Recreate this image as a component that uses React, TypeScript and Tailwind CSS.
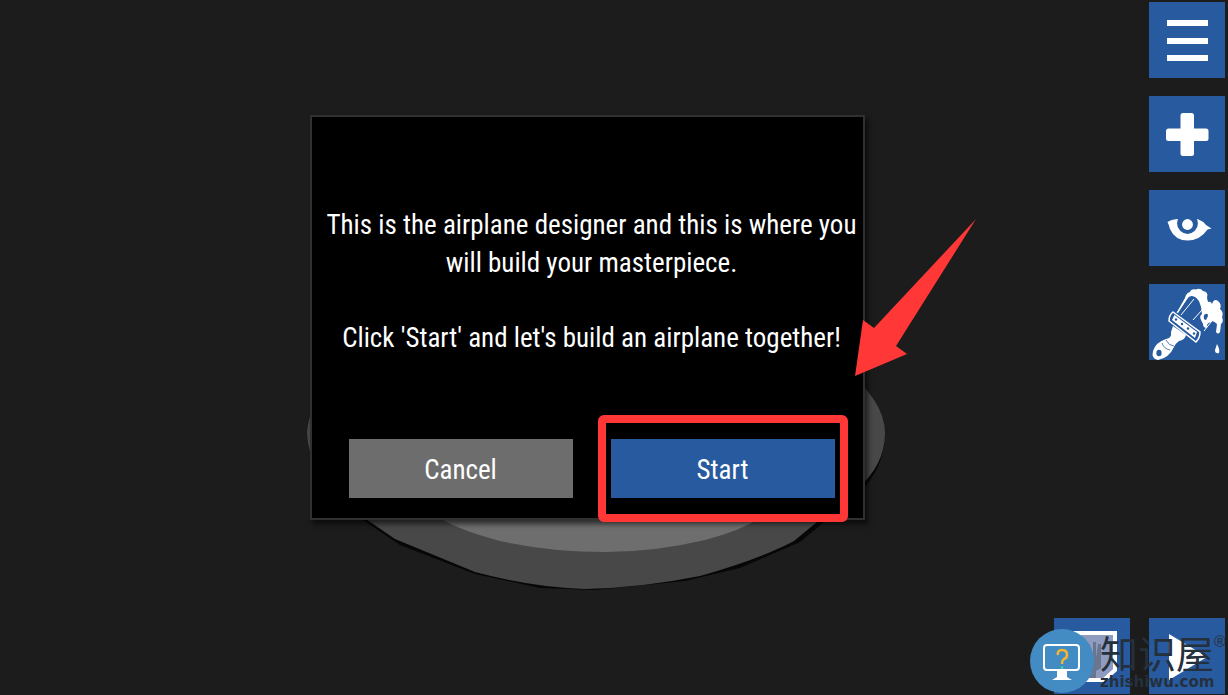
import React from "react";

interface ToolButtonProps {
  label: string;
  children: React.ReactNode;
}

function ToolButton({ label, children }: ToolButtonProps) {
  return (
    <button type="button" aria-label={label} className="block size-[76px] bg-[#285a9f] hover:bg-[#3268b3]">
      <svg viewBox="0 0 76 76" className="size-full" aria-hidden="true">
        {children}
      </svg>
    </button>
  );
}

function MenuIcon() {
  return (
    <g fill="#fff">
      <rect x="18" y="18" width="41" height="6" />
      <rect x="18" y="36" width="41" height="6" />
      <rect x="18" y="53" width="41" height="6" />
    </g>
  );
}

function PlusIcon() {
  return (
    <g fill="#fff">
      <rect x="31.5" y="17" width="13.5" height="43" rx="2.5" />
      <rect x="17" y="32.5" width="42.5" height="12.5" rx="2.5" />
    </g>
  );
}

function EyeIcon() {
  return (
    <g>
      <path
        d="M18.500 32 Q22 29.500 28.500 29 L38 34 L48.500 29 Q54 31 57 35 L62.500 38.500 L58.500 39.500 Q51 50.500 38.500 50.500 Q26 50.500 21 39 Q20 35 18.500 32 Z"
        fill="#fff"
      />
      <circle cx="38.5" cy="33.5" r="10.4" fill="#285a9f" />
      <circle cx="38.5" cy="34.5" r="5.4" fill="#fff" />
    </g>
  );
}

function BrushIcon() {
  return (
    <g>
      {/* bristles and paint */}
      <path d="M28 29 L41 10 M32 31 L45 15 M44 36 L53 26 M55 47 L66 33" stroke="#fff" strokeWidth="1" fill="none" />
      <path
        d="M28 28 L36 14 Q37 9 41 8 Q42 4.500 47 5.500 Q51 3.500 54 7 Q60 8 58 14 L59 18 Q62 17 63 20 Q65 14 69 17 Q73 20 71 25 Q75 28 73 33 Q75 38 72 40 L71 48 Q69 51 67 48 L68 40 Q64 36 62 38 Q57 39 58 44 Q54 44 54 40 L52 36 Q50 32 53 30 L52 23 Q50 15 46 13 Q41 10 38 15 L29 29 Z"
        fill="#fff"
      />
      <path d="M55 31 Q59 28 59 32 L57 36 Q54 36 55 31 Z" fill="#285a9f" />
      <path d="M68 60 Q71 65 70 69 Q66 70 66 66 Z" fill="#fff" />
      {/* ferrule */}
      <path d="M24 28 L51 48 Q51 54 47 58 L20 37 Q20 31 24 28 Z" fill="#285a9f" stroke="#fff" strokeWidth="1.5" />
      <path d="M25.500 31 L48 48 L46 54 L23 36 Z" fill="#fff" />
      <g fill="#285a9f">
        <circle cx="27" cy="35.500" r="1.2" />
        <circle cx="33" cy="40" r="1.2" />
        <circle cx="39" cy="44.500" r="1.2" />
        <circle cx="45" cy="49.500" r="1.2" />
      </g>
      {/* handle */}
      <path d="M24 42 L37 51 Q36 56 30 57 Q27 59 25 63 Q20 74 9 76 Q2 75 4 67 Q7 58 17 55 Q23 54 22 48 Z" fill="#fff" />
      <path d="M13 59 Q15 65 21 66 M17 56 Q20 62 25 62" stroke="#285a9f" strokeWidth="0.8" fill="none" />
      <ellipse cx="10" cy="69" rx="2.6" ry="3.2" fill="#285a9f" />
    </g>
  );
}

function LoadIcon() {
  return (
    <g>
      <path d="M12 15 H61 V52 L50 62 H12 Z" fill="#8f9cc0" stroke="#fff" strokeWidth="4" />
      <path d="M32 56 V28 L36 26 V40 L39 40 V24 L42 24 V40 L44 26 L47 26 V50 L42 53 V60 H34 Z" fill="#6a7590" />
    </g>
  );
}

function PlayIcon() {
  return <path d="M20 16 L58 39 L20 62 Z" fill="#fff" />;
}

function Platform() {
  return (
    <svg viewBox="0 0 555 405" className="absolute inset-0 size-full overflow-visible" aria-hidden="true">
      <path
        d="M-2 322 Q0 358 50 403 L90 430 L165 459 L230 473 L285 475 L375 466 L430 453 L490 427 L550 377 Q573 354 575 322 Z"
        fill="#070707"
      />
      <path
        d="M-3 318 Q0 270 60 250 H530 Q575 285 575 318 Q575 350 547 374 L484 426 Q450 444 390 461 Q330 473 275 474 Q225 473 165 457 L85 424 L50 400 Q-2 360 -3 318 Z"
        fill="#484848"
      />
      <path d="M125 400 Q145 414 190 426 Q240 437 295 437 Q345 437 395 425 Q430 416 452 402 V380 H125 Z" fill="#6e6e6e" />
    </svg>
  );
}

function Arrow() {
  return (
    <svg viewBox="0 0 555 405" className="pointer-events-none absolute inset-0 size-full overflow-visible" aria-hidden="true">
      <path d="M666 104 L564 213 L553 205 L545 261 L597 239 L586 231 Z" fill="#ff3737" />
    </svg>
  );
}

function IntroDialog() {
  return (
    <div className="relative w-full max-w-[555px]">
      <Platform />
      <section
        role="dialog"
        aria-label="Airplane designer"
        className="relative border-2 border-[#303030] bg-black pt-[89px] pb-5 pl-[9px] shadow-[3px_4px_5px_rgba(0,0,0,0.6)]"
      >
        <div className="space-y-[37px] text-center text-[27px] leading-[38px]">
          <p>This is the airplane designer and this is where you will build your masterpiece.</p>
          <p>Click 'Start' and let's build an airplane together!</p>
        </div>
        <div className="mt-[82px] flex gap-[38px] px-7 text-[27px]">
          <button type="button" className="h-[59px] flex-1 bg-[#6d6d6d] pt-1 hover:bg-[#7a7a7a]">
            Cancel
          </button>
          <div className="relative flex-1">
            <button type="button" className="h-[59px] w-full bg-[#285a9f] pt-1 hover:bg-[#3268b3]">
              Start
            </button>
            <div className="pointer-events-none absolute -inset-x-[13px] -inset-y-6 rounded-md border-8 border-[#ff3737]" />
          </div>
        </div>
      </section>
      <Arrow />
    </div>
  );
}

function Watermark() {
  return (
    <div className="pointer-events-none absolute right-0 bottom-0 flex items-center gap-1.5 text-[#25303d]">
      <svg viewBox="0 0 64 66" className="h-[66px] w-16" aria-hidden="true">
        <circle cx="32" cy="32" r="32" fill="#438bc3" />
        <rect x="14" y="16" width="35" height="25" rx="3" fill="none" stroke="#fff" strokeWidth="2" />
        <path d="M27 42 H37 V48 L42 51 H22 L27 48 Z" fill="#fff" />
        <path d="M28 26 Q27 21 32 21 Q37 21 37 26 Q37 29 34 30 Q32 31 32 35" fill="none" stroke="#f5b52e" strokeWidth="2.5" />
        <circle cx="32" cy="38.5" r="1.5" fill="#35d0a0" />
      </svg>
      <div className="w-32">
        <div className="flex items-start">
          <span className="font-['Noto_Sans_CJK_SC',sans-serif] text-[38px] leading-10">知识屋</span>
          <span className="font-['Liberation_Sans',sans-serif] text-base leading-5">®</span>
        </div>
        <div className="font-['DejaVu_Sans',sans-serif] text-[15px] leading-5 font-bold">zhishiwu.com</div>
      </div>
    </div>
  );
}

export default function App() {
  return (
    <main className="relative flex min-h-screen overflow-hidden bg-[#1c1c1c] font-['Roboto_Condensed','Roboto',sans-serif] text-white">
      <div className="flex flex-1 items-center justify-center pb-[60px] pl-[120px]">
        <IntroDialog />
      </div>

      <aside className="flex flex-col items-end justify-between pt-0.5 pr-[3px] pb-px">
        <nav aria-label="Designer tools" className="flex flex-col gap-[18px]">
          <ToolButton label="Menu">
            <MenuIcon />
          </ToolButton>
          <ToolButton label="Add part">
            <PlusIcon />
          </ToolButton>
          <ToolButton label="View">
            <EyeIcon />
          </ToolButton>
          <ToolButton label="Paint">
            <BrushIcon />
          </ToolButton>
        </nav>
        <div className="flex gap-[19px]">
          <ToolButton label="Load">
            <LoadIcon />
          </ToolButton>
          <ToolButton label="Play">
            <PlayIcon />
          </ToolButton>
        </div>
      </aside>

      <Watermark />
    </main>
  );
}
